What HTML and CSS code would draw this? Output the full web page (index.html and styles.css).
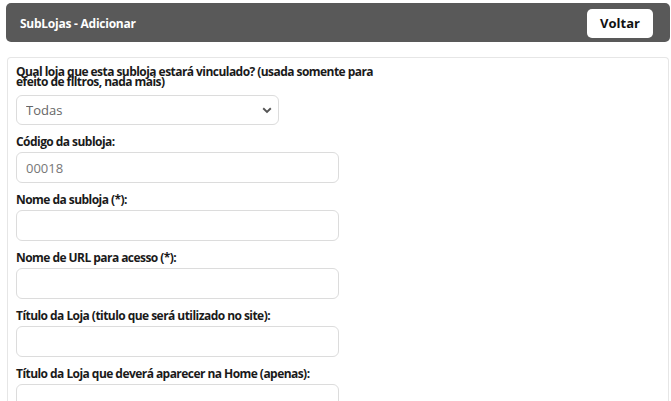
FILE: index.html
```html
<!DOCTYPE html>
<html lang="pt-BR">
<head>
<meta charset="utf-8">
<title>SubLojas - Adicionar</title>
<link rel="stylesheet" href="styles.css">
</head>
<body>
<div class="page">
  <header class="header">
    <h1 class="title">SubLojas - Adicionar</h1>
    <button class="btn-back" type="button">Voltar</button>
  </header>
  <main class="card">
    <form class="form">
      <div class="group first">
        <label class="label label-tight">Qual loja que esta subloja estará vinculado? (usada somente para efeito de filtros, nada mais)</label>
        <div class="select-wrap">
          <select class="select">
            <option>Todas</option>
          </select>
          <svg class="chevron" width="10" height="7" viewBox="0 0 10 7"><path d="M1.2 1.3 L5 5 L8.8 1.3" fill="none" stroke="#555" stroke-width="1.9"/></svg>
        </div>
      </div>
      <div class="group">
        <label class="label">Código da subloja:</label>
        <input class="input" type="text" value="00018">
      </div>
      <div class="group">
        <label class="label">Nome da subloja (*):</label>
        <input class="input" type="text">
      </div>
      <div class="group">
        <label class="label">Nome de URL para acesso (*):</label>
        <input class="input" type="text">
      </div>
      <div class="group">
        <label class="label">Título da Loja (titulo que será utilizado no site):</label>
        <input class="input" type="text">
      </div>
      <div class="group">
        <label class="label">Título da Loja que deverá aparecer na Home (apenas):</label>
        <input class="input" type="text">
      </div>
    </form>
  </main>
</div>
</body>
</html>
```
FILE: styles.css
```css
* { box-sizing: border-box; }
html, body { margin: 0; padding: 0; background: #ffffff; }
body { font-family: "Open Sans", "Liberation Sans", sans-serif; color: #1e1e1e; }
.page { padding: 3px 1px 0 6px; }
.header {
  height: 39px;
  background: #595959;
  border-radius: 5px;
  display: flex;
  align-items: center;
  justify-content: space-between;
  padding: 0 17px 0 14px;
}
.title {
  margin: 0;
  font-size: 12px;
  font-weight: 700;
  color: #ffffff;
  letter-spacing: -0.25px;
  padding-top: 1px;
}
.btn-back {
  width: 66px;
  height: 29px;
  border: none;
  background: #ffffff;
  border-radius: 5px;
  font-family: "Open Sans", "Liberation Sans", sans-serif;
  font-size: 13px;
  font-weight: 700;
  color: #111;
  padding: 0;
  margin-top: 1px;
}
.card {
  margin: 15px 1px 0 1px;
  border: 1px solid #e6e6e6;
  border-bottom: none;
  border-radius: 4px 4px 0 0;
  padding: 9px 8px 0 8px;
  min-height: 360px;
}
.form { width: 366px; }
.group { margin-bottom: 8px; }
.label {
  display: block;
  font-size: 12px;
  font-weight: 700;
  letter-spacing: -0.55px;
  line-height: 17px;
  margin-bottom: 2px;
  color: #1a1a1a;
}
.label-tight { line-height: 10px; margin-bottom: 8px; }
.select-wrap { position: relative; width: 263px; }
.select {
  -webkit-appearance: none;
  appearance: none;
  width: 263px;
  height: 30px;
  border: 1px solid #dcdcdc;
  border-radius: 6px;
  background: #fff;
  font-family: "Open Sans", "Liberation Sans", sans-serif;
  font-size: 13px;
  color: #666;
  padding: 0 0 0 9px;
  outline: none;
}
.chevron { position: absolute; right: 7px; top: 12px; }
.input {
  display: block;
  width: 323px;
  height: 31px;
  border: 1px solid #dcdcdc;
  border-radius: 6px;
  background: #fff;
  font-family: "Open Sans", "Liberation Sans", sans-serif;
  font-size: 13px;
  color: #777;
  padding: 0 0 0 9px;
  outline: none;
}
```
